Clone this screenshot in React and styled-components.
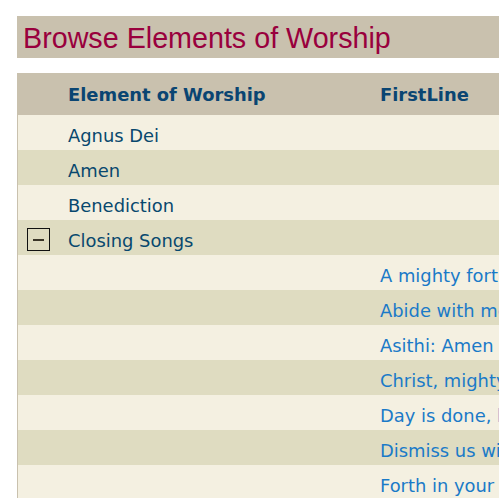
import React from "react";
import styled, { createGlobalStyle } from "styled-components";

const Global = createGlobalStyle`
  html, body { margin: 0; padding: 0; overflow: hidden; background: #ffffff; }
  body { font-family: "DejaVu Sans", Verdana, sans-serif; }
`;

const Page = styled.div`
  padding: 16px 0 0 17px;
  width: 760px;
`;

const TitleBar = styled.h1`
  margin: 0;
  height: 42px;
  box-sizing: border-box;
  padding: 6px 0 0 6px;
  background: #c9c1ae;
  color: #99003d;
  font-family: "Liberation Sans", Arial, sans-serif;
  font-weight: normal;
  font-size: 28.7px;
  line-height: 33px;
`;

const Table = styled.div`
  margin-top: 15px;
  border-left: 1px solid #c9c1ae;
  display: grid;
  grid-template-columns: 42px 312px 1fr;
`;

const Row = styled.div`
  display: contents;
  & > div {
    background: ${(p) => (p.$head ? "#c9c1ae" : p.$alt ? "#dfdcc1" : "#f4f0e1")};
    height: ${(p) => (p.$head ? 42 : 35)}px;
    padding-top: ${(p) => (p.$head ? 11 : 10)}px;
  }
`;

const Cell = styled.div`
  box-sizing: border-box;
  padding-left: 8px;
  font-size: 17.9px;
  line-height: 21px;
  white-space: nowrap;
  overflow: hidden;
  color: #08486e;
`;

const HeadCell = styled(Cell)`
  font-weight: bold;
  color: #0a4572;
`;

const ToggleCell = styled(Cell)`
  padding-left: 9px;
  && { padding-top: 8px; }
`;

const Toggle = styled.span`
  display: flex;
  align-items: center;
  justify-content: center;
  width: 23px;
  height: 23px;
  box-sizing: border-box;
  border: 1px solid #111;
  &::before {
    content: "";
    width: 11px;
    height: 2px;
    background: #3a3528;
  }
`;

const Link = styled.a`
  color: #1a7ac8;
  text-decoration: none;
`;

const elements = ["Agnus Dei", "Amen", "Benediction"];
const songs = [
  "A mighty fortress is our God",
  "Abide with me",
  "Asithi: Amen siakudumisa",
  "Christ, mighty Savior",
  "Day is done, but love unfailing",
  "Dismiss us with your blessing",
  "Forth in your name, O Lord, I go",
];

export default function App() {
  let i = 0;
  return (
    <>
      <Global />
      <Page>
        <TitleBar>Browse Elements of Worship</TitleBar>
        <Table>
          <Row $head>
            <HeadCell />
            <HeadCell>Element of Worship</HeadCell>
            <HeadCell>FirstLine</HeadCell>
          </Row>
          {elements.map((e) => (
            <Row key={e} $alt={i++ % 2 === 1}>
              <Cell />
              <Cell>{e}</Cell>
              <Cell />
            </Row>
          ))}
          <Row $alt={i++ % 2 === 1}>
            <ToggleCell>
              <Toggle />
            </ToggleCell>
            <Cell>Closing Songs</Cell>
            <Cell />
          </Row>
          {songs.map((s) => (
            <Row key={s} $alt={i++ % 2 === 1}>
              <Cell />
              <Cell />
              <Cell>
                <Link href="#">{s}</Link>
              </Cell>
            </Row>
          ))}
        </Table>
      </Page>
    </>
  );
}
